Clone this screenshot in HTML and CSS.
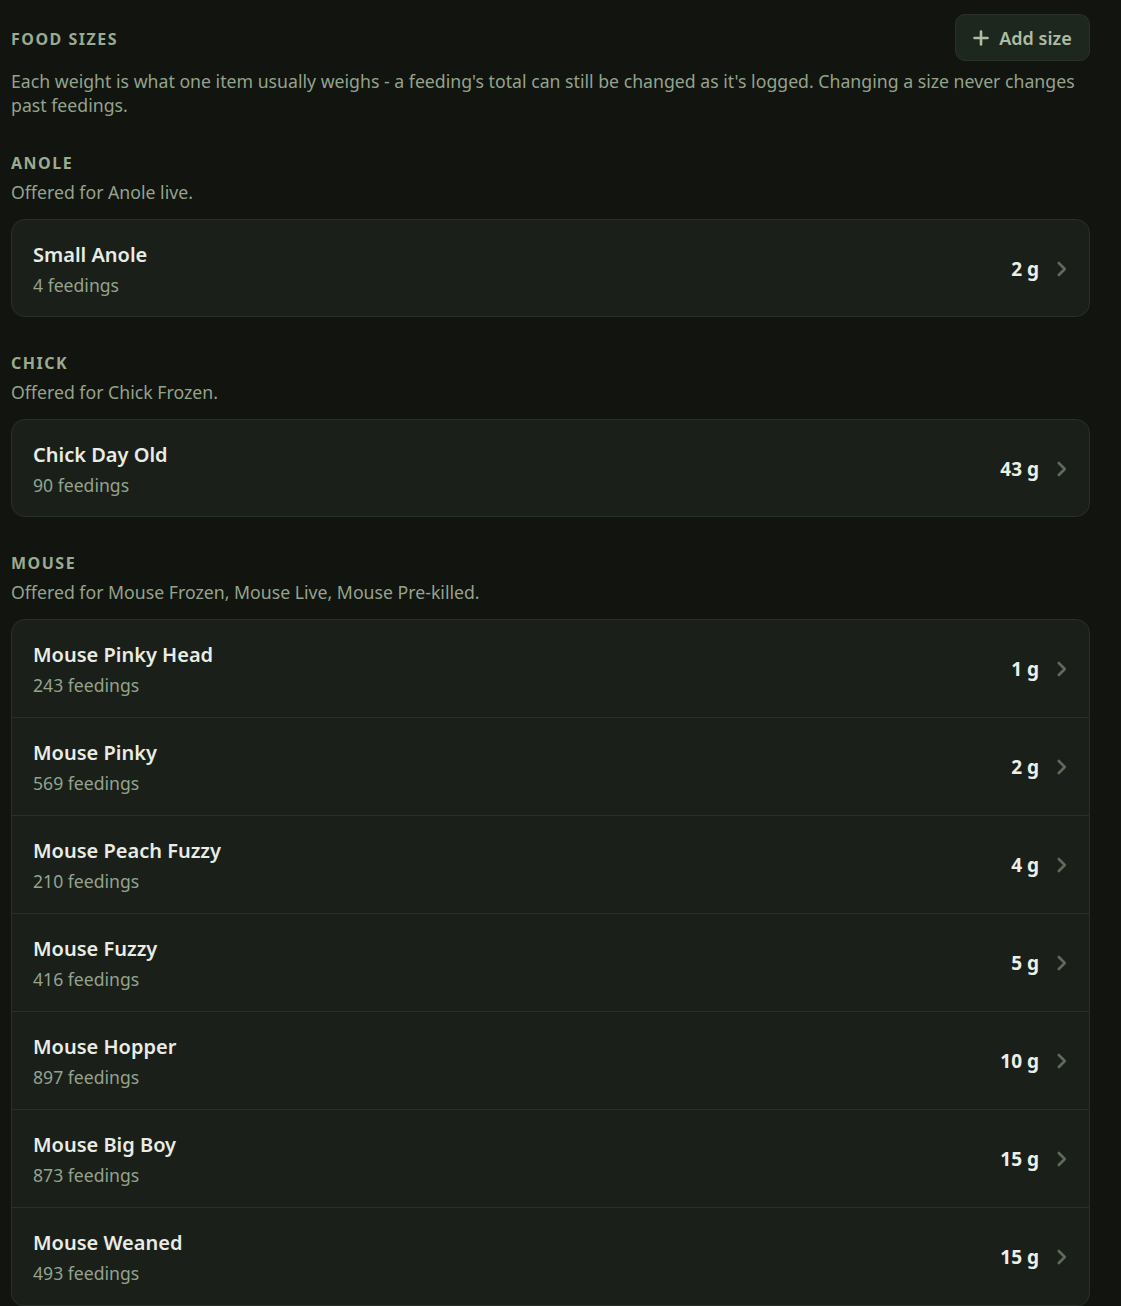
FILE: index.html
```html
<!DOCTYPE html>
<html lang="en">
<head>
<meta charset="utf-8">
<title>Food sizes</title>
<link rel="stylesheet" href="styles.css">
</head>
<body>
<main class="page">
  <header class="head">
    <h1 class="label">Food sizes</h1>
    <button class="add-btn" type="button">
      <svg class="plus" width="16" height="16" viewBox="0 0 16 16" aria-hidden="true"><path d="M8 1.5v13M1.5 8h13" stroke="currentColor" stroke-width="2.6" stroke-linecap="round"/></svg>
      <span>Add size</span>
    </button>
  </header>
  <p class="desc">Each weight is what one item usually weighs - a feeding's total can still be changed as it's logged. Changing a size never changes past feedings.</p>

  <section class="group">
    <h2 class="label">Anole</h2>
    <p class="offered">Offered for Anole live.</p>
    <div class="card">
      <div class="row">
        <div class="info"><div class="name">Small Anole</div><div class="count">4 feedings</div></div>
        <div class="weight">2 g</div>
        <svg class="chev" width="12" height="16" viewBox="0 0 12 16" aria-hidden="true"><path d="M2.8 2l6 6-6 6" fill="none" stroke="currentColor" stroke-width="2.6" stroke-linecap="round" stroke-linejoin="round"/></svg>
      </div>
    </div>
  </section>

  <section class="group">
    <h2 class="label">Chick</h2>
    <p class="offered">Offered for Chick Frozen.</p>
    <div class="card">
      <div class="row">
        <div class="info"><div class="name">Chick Day Old</div><div class="count">90 feedings</div></div>
        <div class="weight">43 g</div>
        <svg class="chev" width="12" height="16" viewBox="0 0 12 16" aria-hidden="true"><path d="M2.8 2l6 6-6 6" fill="none" stroke="currentColor" stroke-width="2.6" stroke-linecap="round" stroke-linejoin="round"/></svg>
      </div>
    </div>
  </section>

  <section class="group">
    <h2 class="label">Mouse</h2>
    <p class="offered">Offered for Mouse Frozen, Mouse Live, Mouse Pre-killed.</p>
    <div class="card">
      <div class="row">
        <div class="info"><div class="name">Mouse Pinky Head</div><div class="count">243 feedings</div></div>
        <div class="weight">1 g</div>
        <svg class="chev" width="12" height="16" viewBox="0 0 12 16" aria-hidden="true"><path d="M2.8 2l6 6-6 6" fill="none" stroke="currentColor" stroke-width="2.6" stroke-linecap="round" stroke-linejoin="round"/></svg>
      </div>
      <div class="row">
        <div class="info"><div class="name">Mouse Pinky</div><div class="count">569 feedings</div></div>
        <div class="weight">2 g</div>
        <svg class="chev" width="12" height="16" viewBox="0 0 12 16" aria-hidden="true"><path d="M2.8 2l6 6-6 6" fill="none" stroke="currentColor" stroke-width="2.6" stroke-linecap="round" stroke-linejoin="round"/></svg>
      </div>
      <div class="row">
        <div class="info"><div class="name">Mouse Peach Fuzzy</div><div class="count">210 feedings</div></div>
        <div class="weight">4 g</div>
        <svg class="chev" width="12" height="16" viewBox="0 0 12 16" aria-hidden="true"><path d="M2.8 2l6 6-6 6" fill="none" stroke="currentColor" stroke-width="2.6" stroke-linecap="round" stroke-linejoin="round"/></svg>
      </div>
      <div class="row">
        <div class="info"><div class="name">Mouse Fuzzy</div><div class="count">416 feedings</div></div>
        <div class="weight">5 g</div>
        <svg class="chev" width="12" height="16" viewBox="0 0 12 16" aria-hidden="true"><path d="M2.8 2l6 6-6 6" fill="none" stroke="currentColor" stroke-width="2.6" stroke-linecap="round" stroke-linejoin="round"/></svg>
      </div>
      <div class="row">
        <div class="info"><div class="name">Mouse Hopper</div><div class="count">897 feedings</div></div>
        <div class="weight">10 g</div>
        <svg class="chev" width="12" height="16" viewBox="0 0 12 16" aria-hidden="true"><path d="M2.8 2l6 6-6 6" fill="none" stroke="currentColor" stroke-width="2.6" stroke-linecap="round" stroke-linejoin="round"/></svg>
      </div>
      <div class="row">
        <div class="info"><div class="name">Mouse Big Boy</div><div class="count">873 feedings</div></div>
        <div class="weight">15 g</div>
        <svg class="chev" width="12" height="16" viewBox="0 0 12 16" aria-hidden="true"><path d="M2.8 2l6 6-6 6" fill="none" stroke="currentColor" stroke-width="2.6" stroke-linecap="round" stroke-linejoin="round"/></svg>
      </div>
      <div class="row">
        <div class="info"><div class="name">Mouse Weaned</div><div class="count">493 feedings</div></div>
        <div class="weight">15 g</div>
        <svg class="chev" width="12" height="16" viewBox="0 0 12 16" aria-hidden="true"><path d="M2.8 2l6 6-6 6" fill="none" stroke="currentColor" stroke-width="2.6" stroke-linecap="round" stroke-linejoin="round"/></svg>
      </div>
    </div>
  </section>
</main>
</body>
</html>
```

FILE: styles.css
```css
* { box-sizing: border-box; }
html, body {
  margin: 0;
  background: #11140f;
  height: 100%;
}
body {
  font-family: "Noto Sans", "Open Sans", sans-serif;
  color: #e8ece4;
  overflow: hidden;
}
.page {
  padding: 14px 31px 0 11px;
}
.head {
  display: flex;
  justify-content: space-between;
  align-items: center;
}
.label {
  margin: 0;
  font-size: 16px;
  line-height: 20px;
  font-weight: 700;
  letter-spacing: 1.5px;
  text-transform: uppercase;
  color: #9aab90;
}
.head .label { margin-top: 3px; }
.add-btn {
  display: flex;
  align-items: center;
  justify-content: center;
  gap: 10px;
  height: 47px;
  width: 135px;
  padding: 0;
  white-space: nowrap;
  background: #1e271e;
  border: 1px solid #283228;
  border-radius: 10px;
  color: #adbca4;
  font-family: inherit;
  font-size: 18px;
  font-weight: 600;
}
.plus { flex: none; }
.desc {
  margin: 8px 0 0;
  font-size: 17.7px;
  line-height: 24px;
  color: #94a38c;
}
.group { margin-top: 36px; }
.offered {
  margin: 7px 0 0;
  font-size: 17.7px;
  line-height: 24px;
  color: #94a38c;
}
.card {
  margin-top: 15px;
  background: #1a1f1a;
  border: 1px solid #283028;
  border-radius: 14px;
  overflow: hidden;
}
.row {
  display: flex;
  align-items: center;
  height: 98px;
  padding: 1px 21px 0;
  border-bottom: 1px solid #283028;
}
.row:only-child { height: 96px; border-bottom: none; }
.info {
  flex: 1;
  display: flex;
  flex-direction: column;
}
.name {
  font-size: 20px;
  line-height: 28px;
  font-weight: 600;
  color: #e8ece4;
}
.count {
  margin-top: 4px;
  font-size: 17.6px;
  line-height: 24px;
  color: #94a38c;
}
.weight {
  font-size: 19px;
  font-weight: 700;
  color: #ecefe8;
  margin-right: 17px;
}
.chev {
  color: #5e6b59;
  flex: none;
}
```
